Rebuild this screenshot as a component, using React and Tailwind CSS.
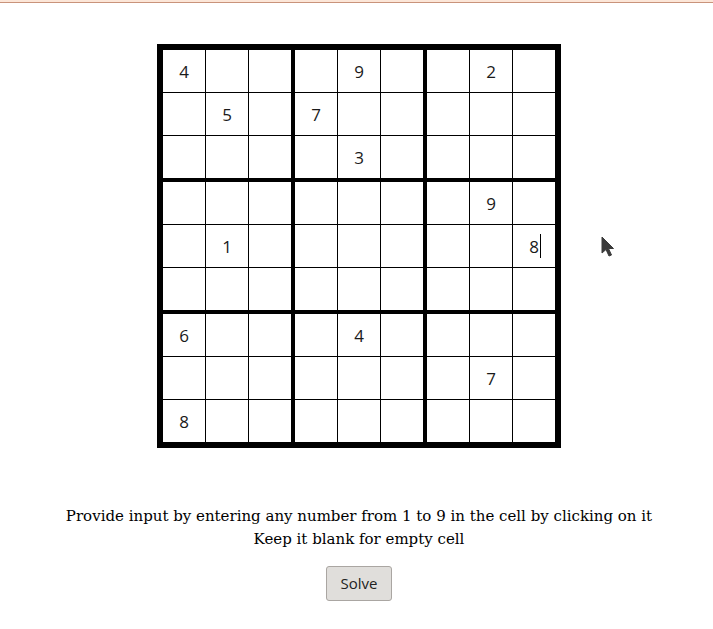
import React from "react";

const grid = [
  ["4", "", "", "", "9", "", "", "2", ""],
  ["", "5", "", "7", "", "", "", "", ""],
  ["", "", "", "", "3", "", "", "", ""],
  ["", "", "", "", "", "", "", "9", ""],
  ["", "1", "", "", "", "", "", "", "8"],
  ["", "", "", "", "", "", "", "", ""],
  ["6", "", "", "", "4", "", "", "", ""],
  ["", "", "", "", "", "", "", "7", ""],
  ["8", "", "", "", "", "", "", "", ""],
];

function Cell({ r, c }) {
  const v = grid[r][c];
  const focused = r === 4 && c === 8;
  return (
    <div className="w-[42px] h-[42px] bg-white flex items-center justify-center text-[17px] text-[#1a1a1a] leading-none">
      {focused ? (
        <span className="relative">
          {v}
          <span className="absolute left-full ml-[1px] top-1/2 -translate-y-1/2 w-px h-[24px] bg-black" />
        </span>
      ) : (
        v
      )}
    </div>
  );
}

function Block({ br, bc }) {
  const cells = [];
  for (let i = 0; i < 3; i++)
    for (let j = 0; j < 3; j++)
      cells.push(<Cell key={i * 3 + j} r={br * 3 + i} c={bc * 3 + j} />);
  return <div className="grid grid-cols-[repeat(3,42px)] gap-px bg-black">{cells}</div>;
}

export default function App() {
  const blocks = [];
  for (let i = 0; i < 3; i++)
    for (let j = 0; j < 3; j++) blocks.push(<Block key={i * 3 + j} br={i} bc={j} />);
  return (
    <div className="relative min-h-screen bg-white" style={{ fontFamily: "'Open Sans', sans-serif" }}>
      <div className="h-[2px] bg-[#fce6d8]" />
      <div className="h-px bg-[#c9937b]" />
      <div className="flex flex-col items-center pl-[5px] pt-[41px]">
        <div className="grid grid-cols-[repeat(3,128px)] gap-[4px] bg-black p-[6px]">{blocks}</div>
        <div
          className="mt-[57px] text-center text-[15px] leading-[23px] text-black"
          style={{ fontFamily: "'DejaVu Serif', serif" }}
        >
          <div>Provide input by entering any number from 1 to 9 in the cell by clicking on it</div>
          <div>Keep it blank for empty cell</div>
        </div>
        <button className="mt-[15px] w-[66px] h-[35px] rounded-[3px] border border-[#aaa6a2] bg-[#e0dedb] text-[15px] text-[#222]">
          Solve
        </button>
      </div>
      <svg className="absolute left-[601px] top-[236px]" width="16" height="24" viewBox="0 0 16 24">
        <path d="M1 1 L1 17 L5 13.5 L8 20 L10.5 19 L7.5 12.5 L12.5 12.5 Z" fill="#3a3a3a" stroke="#3a3a3a" strokeWidth="1" strokeLinejoin="round" />
      </svg>
    </div>
  );
}
